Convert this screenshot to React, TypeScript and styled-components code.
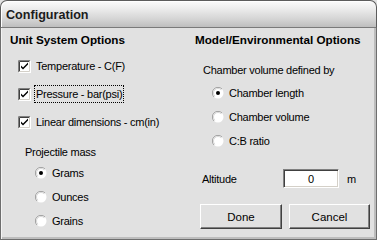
import React from "react";
import styled, { createGlobalStyle } from "styled-components";

const GlobalStyle = createGlobalStyle`
  html, body {
    margin: 0;
    padding: 0;
    background: #e1e1e1;
  }
  * {
    box-sizing: border-box;
  }
`;

function CheckIcon({ checked }: { checked: boolean }) {
  return (
    <svg width="13" height="13" viewBox="0 0 13 13">
      <rect x="0" y="0" width="13" height="13" fill="#ffffff" />
      <path d="M0.5 12.5V0.5H12.5" stroke="#808080" fill="none" />
      <path d="M1.5 11.5V1.5H11.5" stroke="#404040" fill="none" />
      <path d="M0.5 12.5H12.5V0.5" stroke="#ffffff" fill="none" />
      <path d="M1.5 11.5H11.5V1.5" stroke="#d4d0c8" fill="none" />
      {checked && (
        <path
          d="M3 5.5L5 7.5L10 2.5V4.5L5 9.5L3 7.5Z"
          fill="#000000"
        />
      )}
    </svg>
  );
}

function RadioIcon({ checked }: { checked: boolean }) {
  return (
    <svg width="12" height="12" viewBox="0 0 12 12">
      <circle cx="6" cy="6" r="5.5" fill="#ffffff" />
      <path d="M10 2A5.5 5.5 0 0 0 2 10" stroke="#a0a0a0" fill="none" />
      <path d="M9.2 2.8A4.5 4.5 0 0 0 2.8 9.2" stroke="#d8d8d8" fill="none" />
      {checked && <circle cx="6" cy="6" r="2" fill="#000000" />}
    </svg>
  );
}

export default function App() {
  return (
    <>
      <GlobalStyle />
      <Window>
        <TitleBar>Configuration</TitleBar>
        <Body>
          <Column>
            <Heading>Unit System Options</Heading>
            <CheckList>
              <CheckRow>
                <CheckIcon checked />
                <Label>Temperature - C(F)</Label>
              </CheckRow>
              <CheckRow>
                <CheckIcon checked />
                <Label $focused>Pressure - bar(psi)</Label>
              </CheckRow>
              <CheckRow>
                <CheckIcon checked />
                <Label>Linear dimensions - cm(in)</Label>
              </CheckRow>
            </CheckList>
            <GroupLabel $indent={15} $top={8}>
              Projectile mass
            </GroupLabel>
            <RadioList $indent={25} $top={1}>
              <RadioRow>
                <RadioIcon checked />
                <Label>Grams</Label>
              </RadioRow>
              <RadioRow>
                <RadioIcon checked={false} />
                <Label>Ounces</Label>
              </RadioRow>
              <RadioRow>
                <RadioIcon checked={false} />
                <Label>Grains</Label>
              </RadioRow>
            </RadioList>
          </Column>
          <Column $right>
            <Heading>Model/Environmental Options</Heading>
            <GroupLabel $indent={8} $top={14}>
              Chamber volume defined by
            </GroupLabel>
            <RadioList $indent={17} $top={3}>
              <RadioRow>
                <RadioIcon checked />
                <Label>Chamber length</Label>
              </RadioRow>
              <RadioRow>
                <RadioIcon checked={false} />
                <Label>Chamber volume</Label>
              </RadioRow>
              <RadioRow>
                <RadioIcon checked={false} />
                <Label>C:B ratio</Label>
              </RadioRow>
            </RadioList>
            <AltitudeRow>
              <AltitudeLabel>Altitude</AltitudeLabel>
              <NumberBox>0</NumberBox>
              <Unit>m</Unit>
            </AltitudeRow>
            <ButtonRow>
              <Button $width={82}>Done</Button>
              <Button $width={81}>Cancel</Button>
            </ButtonRow>
          </Column>
        </Body>
      </Window>
    </>
  );
}

const Window = styled.div`
  width: 377px;
  height: 240px;
  display: flex;
  flex-direction: column;
  font-family: "Liberation Sans", Arial, sans-serif;
  color: #000;
  background: #e1e1e1;
`;

const TitleBar = styled.div`
  height: 28px;
  display: flex;
  align-items: center;
  padding: 1px 0 0 5px;
  border: 1px solid #5c5c5c;
  border-bottom-color: #7a7a7a;
  border-radius: 7px 7px 0 0;
  background: linear-gradient(
    180deg,
    #fbfbfb 0%,
    #ececec 30%,
    #d4d4d4 70%,
    #bebebe 100%
  );
  box-shadow: inset 1px 1px 0 #ffffff;
  font-size: 12.6px;
  font-weight: 700;
  color: #1c1c1c;
`;

const Body = styled.div`
  flex: 1;
  display: grid;
  grid-template-columns: 187px 1fr;
  border: solid #6e6e6e;
  border-width: 0 1px 1px 1px;
  box-shadow: inset 1px 0 0 #f4f4f4, inset -2px -2px 0 #bdbdbd;
  background: #e1e1e1;
`;

const Column = styled.div<{ $right?: boolean }>`
  display: flex;
  flex-direction: column;
  padding: 4px 0 0 ${(p) => (p.$right ? 7 : 9)}px;
`;

const Heading = styled.div`
  font-size: 11.7px;
  font-weight: 700;
  line-height: 16px;
  white-space: nowrap;
`;

const CheckList = styled.div`
  display: flex;
  flex-direction: column;
  margin-top: 4px;
`;

const CheckRow = styled.div`
  height: 28px;
  display: flex;
  align-items: center;
  gap: 5px;
  padding-left: 8px;
`;

const Label = styled.span<{ $focused?: boolean }>`
  font-size: 11px;
  letter-spacing: -0.25px;
  line-height: 14px;
  white-space: nowrap;
  padding: 1px 1px;
  margin-left: -1px;
  outline: ${(p) => (p.$focused ? "1px dotted #000" : "none")};
`;

const GroupLabel = styled.div<{ $indent: number; $top: number }>`
  font-size: 11px;
  letter-spacing: -0.25px;
  line-height: 16px;
  padding-left: ${(p) => p.$indent}px;
  margin-top: ${(p) => p.$top}px;
  white-space: nowrap;
`;

const RadioList = styled.div<{ $indent: number; $top: number }>`
  display: flex;
  flex-direction: column;
  padding-left: ${(p) => p.$indent}px;
  margin-top: ${(p) => p.$top}px;
`;

const RadioRow = styled.div`
  height: 24px;
  display: flex;
  align-items: center;
  gap: 5px;
`;

const AltitudeRow = styled.div`
  display: flex;
  align-items: center;
  margin-top: 16px;
  padding-left: 7px;
  height: 19px;
`;

const AltitudeLabel = styled.span`
  width: 81px;
  font-size: 11px;
  letter-spacing: -0.25px;
`;

const NumberBox = styled.div`
  width: 56px;
  height: 19px;
  display: flex;
  align-items: center;
  justify-content: center;
  background: #fff;
  border: 1px solid;
  border-color: #808080 #ffffff #ffffff #808080;
  box-shadow: inset 1px 1px 0 #404040, inset -1px -1px 0 #d4d0c8;
  font-size: 11px;
`;

const Unit = styled.span`
  margin-left: 8px;
  font-size: 11px;
`;

const ButtonRow = styled.div`
  display: flex;
  gap: 7px;
  margin-top: 16px;
  padding-left: 5px;
`;

const Button = styled.button<{ $width: number }>`
  width: ${(p) => p.$width}px;
  height: 25px;
  padding: 0;
  background: #e1e1e1;
  border: 1px solid;
  border-color: #ffffff #404040 #404040 #ffffff;
  box-shadow: inset -1px -1px 0 #808080;
  font-family: "Liberation Sans", Arial, sans-serif;
  font-size: 11.5px;
  color: #000;
`;
